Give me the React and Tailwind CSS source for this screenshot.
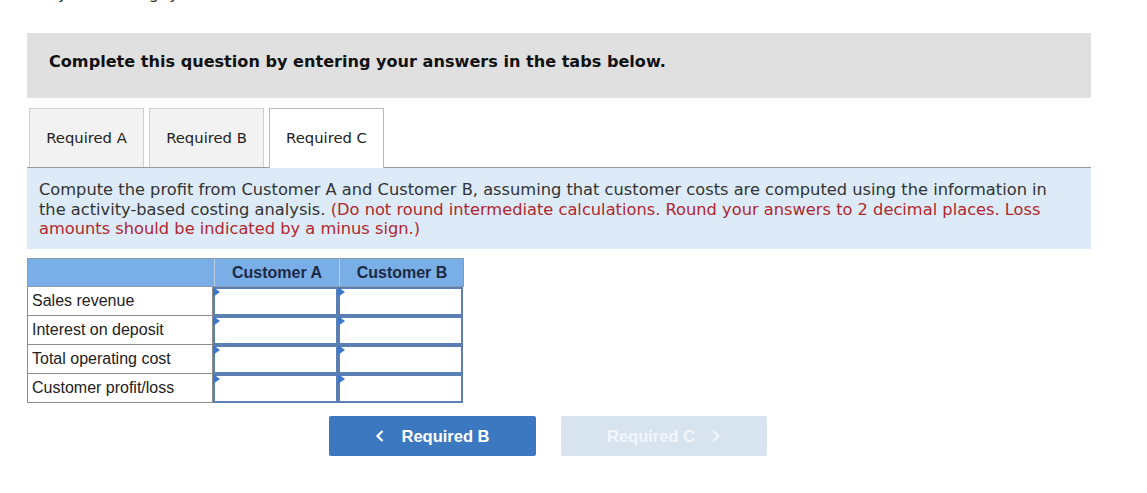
import React from "react";

const verdana = { fontFamily: '"DejaVu Sans", Verdana, sans-serif' };
const arial = { fontFamily: '"Liberation Sans", Arial, sans-serif' };

function InputCell() {
  return (
    <div className="relative h-full border-2 border-[#5b7fb3] bg-white">
      <svg className="absolute -left-[2px] -top-[2px]" width="7" height="10" viewBox="0 0 7 10">
        <polygon points="0,0 7,5 0,10" fill="#3d78c8" />
      </svg>
    </div>
  );
}

export default function App() {
  const rows = ["Sales revenue", "Interest on deposit", "Total operating cost", "Customer profit/loss"];
  return (
    <div className="w-[1147px] h-[493px] bg-white overflow-hidden" style={verdana}>
      <div className="h-[4px] overflow-hidden text-[16px] text-[#333] leading-[20px]">
        <div className="-mt-[16px] pl-[58px] whitespace-pre">{"y                g  y"}</div>
      </div>
      <div className="ml-[27px] w-[1064px]">
        <div className="mt-[29px] h-[65px] bg-[#e0e0e0] pt-[17px] pl-[22px]">
          <span className="font-bold text-[16.1px] text-[#111]">Complete this question by entering your answers in the tabs below.</span>
        </div>
        <div className="mt-[10px] flex items-end h-[59px] pl-[2px] gap-[5px]">
          <div className="w-[115px] h-[59px] bg-[#f2f2f2] border border-[#d0d0d0] border-b-0 flex items-center justify-center text-[14.8px] text-[#222]">Required A</div>
          <div className="w-[115px] h-[59px] bg-[#f2f2f2] border border-[#d0d0d0] border-b-0 flex items-center justify-center text-[14.8px] text-[#222]">Required B</div>
          <div className="w-[115px] h-[60px] bg-white border border-[#b8b8b8] border-b-0 flex items-center justify-center text-[14.8px] text-[#222] relative top-[1px]">Required C</div>
        </div>
        <div className="border-t border-[#9a9a9a] bg-[#dcebf7] h-[82px] px-[12px] pt-[12px] text-[16.25px] leading-[19.5px] text-[#333] whitespace-nowrap">
          Compute the profit from Customer A and Customer B, assuming that customer costs are computed using the information in
          <br />
          the activity-based costing analysis.{" "}
          <span className="text-[#b0272d]">(Do not round intermediate calculations. Round your answers to 2 decimal places. Loss</span>
          <br />
          <span className="text-[#b0272d]">amounts should be indicated by a minus sign.)</span>
        </div>
        <div className="mt-[9px] w-[437px]" style={arial}>
          <div className="grid grid-cols-[186px_125px_125px] h-[29px] bg-[#7aaee6] border border-[#8a9bb0]">
            <div></div>
            <div className="border-l border-[#b8cde6] flex items-center justify-center font-bold text-[16px] text-[#1c2a45]">Customer A</div>
            <div className="border-l border-[#b8cde6] flex items-center justify-center font-bold text-[16px] text-[#1c2a45]">Customer B</div>
          </div>
          {rows.map((r) => (
            <div key={r} className="grid grid-cols-[186px_125px_125px] h-[29px]">
              <div className="border border-t-0 border-[#8c8c8c] flex items-center pl-[4px] text-[16px] text-[#222]">{r}</div>
              <InputCell />
              <InputCell />
            </div>
          ))}
        </div>
        <div className="mt-[13px] flex gap-[25px] pl-[302px]" style={arial}>
          <div className="w-[207px] h-[40px] rounded-[2px] bg-[#3b78c0] flex items-center justify-center gap-[16px] text-white font-bold text-[16.5px]">
            <svg width="10" height="14" viewBox="0 0 10 14"><polyline points="7.5,2 2.5,7 7.5,12" fill="none" stroke="white" strokeWidth="2.2" /></svg>
            <span>Required B</span>
          </div>
          <div className="w-[206px] h-[40px] rounded-[2px] bg-[#d8e3f0] flex items-center justify-center gap-[16px] text-[#f2f6fb] font-bold text-[16.5px]">
            <span>Required C</span>
            <svg width="10" height="14" viewBox="0 0 10 14"><polyline points="2.5,2 7.5,7 2.5,12" fill="none" stroke="#f2f6fb" strokeWidth="2.2" /></svg>
          </div>
        </div>
      </div>
    </div>
  );
}
